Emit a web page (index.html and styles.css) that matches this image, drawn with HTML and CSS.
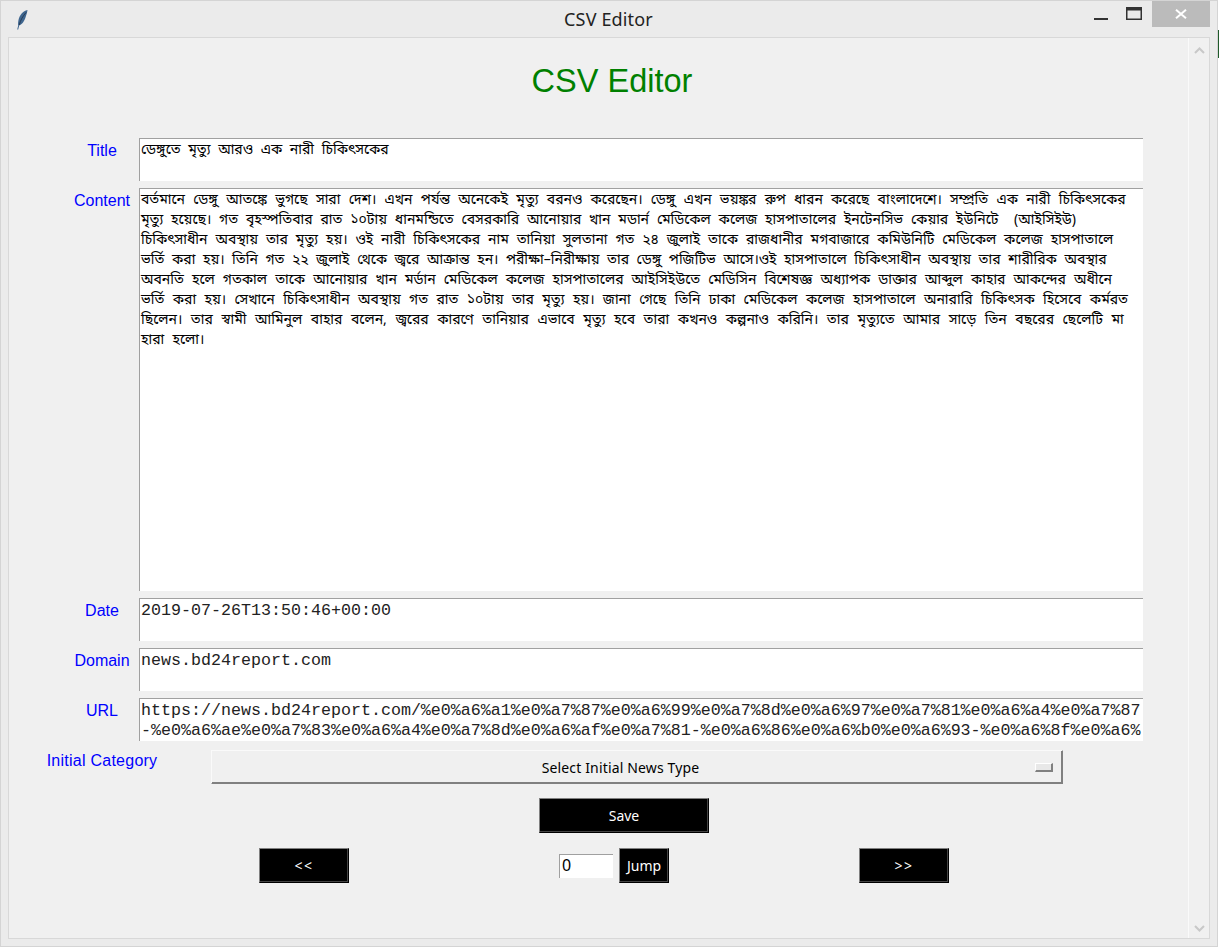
FILE: index.html
```html
<!DOCTYPE html>
<html lang="bn">
<head>
<meta charset="utf-8">
<title>CSV Editor</title>
<link rel="stylesheet" href="styles.css">
</head>
<body>
<div class="window">
  <header class="titlebar">
    <svg class="feather" width="14" height="22" viewBox="0 0 14 22"><path d="M12.500 1 C8 2 4.500 6 3.500 11 C3 13.500 3 15 3.200 16.500 L2.200 20.500 L3.200 20.500 L4.200 16.500 C7 15.500 9.500 12 10.500 8.500 C11.500 5.500 12.300 3 12.500 1 Z" fill="#3f668f"/><path d="M11 3.500 C8 7 5.500 11 4.200 16" stroke="#1e2f45" stroke-width="0.800" fill="none"/></svg>
    <span class="window-title">CSV Editor</span>
    <div class="controls">
      <span class="ctl"><svg width="16" height="16" viewBox="0 0 16 16"><rect x="1" y="12" width="14" height="2" fill="#333"/></svg></span>
      <span class="ctl"><svg width="16" height="14" viewBox="0 0 16 14"><rect x="0.750" y="0.750" width="14.500" height="11.500" fill="none" stroke="#333" stroke-width="1.500"/><rect x="1" y="1" width="14" height="2.500" fill="#333"/></svg></span>
      <span class="ctl close"><svg width="12" height="10" viewBox="0 0 12 10"><path d="M1 0.800 L11 9.200 M11 0.800 L1 9.200" stroke="#fff" stroke-width="2"/></svg></span>
    </div>
  </header>
  <div class="panel">
    <main class="main">
      <h1 class="heading">CSV Editor</h1>
      <div class="form">
        <label class="label">Title</label>
        <div class="field bn short"><span class="line ws-title">ডেঙ্গুতে মৃত্যু আরও এক নারী চিকিৎসকের</span></div>
        <label class="label">Content</label>
        <div class="field bn tall">
          <span class="line">বর্তমানে ডেঙ্গু আতঙ্কে ভুগছে সারা দেশ। এখন পর্যন্ত অনেকেই মৃত্যু বরনও করেছেন। ডেঙ্গু এখন ভয়ঙ্কর রুপ ধারন করেছে বাংলাদেশে। সম্প্রতি এক নারী চিকিৎসকের</span>
          <span class="line ws-2">মৃত্যু হয়েছে। গত বৃহস্পতিবার রাত ১০টায় ধানমন্ডিতে বেসরকারি আনোয়ার খান মডার্ন মেডিকেল কলেজ হাসপাতালের ইনটেনসিভ কেয়ার ইউনিটে  (আইসিইউ)</span>
          <span class="line ws-3">চিকিৎসাধীন অবস্থায় তার মৃত্যু হয়। ওই নারী চিকিৎসকের নাম তানিয়া সুলতানা গত ২৪ জুলাই তাকে রাজধানীর মগবাজারে কমিউনিটি মেডিকেল কলেজ হাসপাতালে</span>
          <span class="line ws-4">ভর্তি করা হয়। তিনি গত ২২ জুলাই থেকে জ্বরে আক্রান্ত হন। পরীক্ষা–নিরীক্ষায় তার ডেঙ্গু পজিটিভ আসে।ওই হাসপাতালে চিকিৎসাধীন অবস্থায় তার শারীরিক অবস্থার</span>
          <span class="line ws-5">অবনতি হলে গতকাল তাকে আনোয়ার খান মর্ডান মেডিকেল কলেজ হাসপাতালের আইসিইউতে মেডিসিন বিশেষজ্ঞ অধ্যাপক ডাক্তার আব্দুল কাহার আকন্দের অধীনে</span>
          <span class="line ws-6">ভর্তি করা হয়। সেখানে চিকিৎসাধীন অবস্থায় গত রাত ১০টায় তার মৃত্যু হয়। জানা গেছে তিনি ঢাকা মেডিকেল কলেজ হাসপাতালে অনারারি চিকিৎসক হিসেবে কর্মরত</span>
          <span class="line ws-7">ছিলেন। তার স্বামী আমিনুল বাহার বলেন, জ্বরের কারণে তানিয়ার এভাবে মৃত্যু হবে তারা কখনও কল্পনাও করিনি। তার মৃত্যুতে আমার সাড়ে তিন বছরের ছেলেটি মা</span>
          <span class="line">হারা হলো।</span>
        </div>
        <label class="label">Date</label>
        <div class="field mono short"><span class="line">2019-07-26T13:50:46+00:00</span></div>
        <label class="label">Domain</label>
        <div class="field mono short"><span class="line">news.bd24report.com</span></div>
        <label class="label">URL</label>
        <div class="field mono short">
          <span class="line">https://news.bd24report.com/%e0%a6%a1%e0%a7%87%e0%a6%99%e0%a7%8d%e0%a6%97%e0%a7%81%e0%a6%a4%e0%a7%87</span>
          <span class="line">-%e0%a6%ae%e0%a7%83%e0%a6%a4%e0%a7%8d%e0%a6%af%e0%a7%81-%e0%a6%86%e0%a6%b0%e0%a6%93-%e0%a6%8f%e0%a6%</span>
        </div>
      </div>
      <div class="category-row">
        <label class="label category-label">Initial Category</label>
        <div class="menu">
          <span class="menu-text">Select Initial News Type</span>
          <span class="menu-indicator"></span>
        </div>
      </div>
      <div class="save-row"><button class="btn save">Save</button></div>
      <div class="nav-row">
        <button class="btn nav">&lt;&lt;</button>
        <div class="jump">
          <input class="jump-input" value="0">
          <button class="btn jump-btn">Jump</button>
        </div>
        <button class="btn nav">&gt;&gt;</button>
      </div>
    </main>
    <aside class="scrollbar">
      <svg width="11" height="7" viewBox="0 0 11 7"><path d="M1 6 L5.500 1.500 L10 6" fill="none" stroke="#c8c8c8" stroke-width="2"/></svg>
      <svg width="11" height="7" viewBox="0 0 11 7"><path d="M1 1 L5.500 5.500 L10 1" fill="none" stroke="#c8c8c8" stroke-width="2"/></svg>
    </aside>
  </div>
</div>
<div class="backdrop-strip"></div>
</body>
</html>
```
FILE: styles.css
```css
* { box-sizing: border-box; }
html, body { margin: 0; padding: 0; height: 100%; overflow: hidden; }
body { background: #fff; font-family: "Liberation Sans", Arial, sans-serif; }

.window {
  width: 1218px;
  height: 947px;
  background: #ebebeb;
  border: 1px solid #d4d4d4;
  display: flex;
  flex-direction: column;
  padding-bottom: 7px;
}

.titlebar {
  height: 36px;
  flex: none;
  display: flex;
  align-items: flex-start;
  position: relative;
}
.feather { margin: 8px 0 0 14px; flex: none; }
.window-title {
  position: absolute;
  left: 0; right: 1px;
  top: 6px;
  text-align: center;
  font: 18px/24px "Noto Sans", "Open Sans", sans-serif;
  letter-spacing: 0.150px;
  color: #222;
}
.controls { margin-left: auto; display: flex; margin-right: 7px; }
.ctl {
  width: 33px; height: 26px;
  display: flex; align-items: center; justify-content: center;
}
.close { width: 58px; background: #bbb; margin-left: 2px; }

.panel {
  flex: 1;
  margin: 0 7px;
  border: 1px solid #d8d8d8;
  background: #f0f0f0;
  display: flex;
  min-height: 0;
}
.main { flex: 1; min-width: 0; padding-left: 56px; }
.heading {
  margin: 0;
  padding: 25px 0 39px 0;
  width: 1094px;
  text-align: center;
  font: 400 32.500px/36px "Liberation Sans", Arial, sans-serif;
  color: #008000;
}

.form {
  display: grid;
  grid-template-columns: 74px 1004px;
  row-gap: 7px;
}
.label {
  justify-self: center;
  white-space: nowrap;
  font-size: 16px;
  line-height: 18px;
  padding-top: 4px;
  color: #00f;
}
.field {
  background: #fff;
  border-top: 1px solid #a0a0a0;
  border-left: 1px solid #a0a0a0;
  padding: 2px 0 0 1px;
  overflow: hidden;
  color: #000;
}
.short { height: 43px; }
.tall { height: 403px; }
.line { display: block; white-space: pre; }
.bn {
  font-family: "Noto Sans Bengali", "Lohit Bengali", "Noto Sans", "Liberation Sans", sans-serif;
  font-size: 14px;
  line-height: 20px;
  word-spacing: 4.600px;
}
.ws-title { word-spacing: 4px; }
.ws-2 { word-spacing: 4.200px; }
.ws-3 { word-spacing: 4.250px; }
.ws-4 { word-spacing: 3.930px; }
.ws-5 { word-spacing: 4.450px; }
.ws-6 { word-spacing: 4.750px; }
.ws-7 { word-spacing: 4.950px; }
.mono {
  font-family: "Liberation Mono", "Courier New", monospace;
  font-size: 16.670px;
  line-height: 20px;
  color: #222;
}

.category-row {
  display: grid;
  grid-template-columns: 74px 1fr;
  margin-top: 9px;
  align-items: start;
}
.category-label { padding-top: 2px; letter-spacing: 0.250px; }
.menu {
  margin-left: 72px;
  width: 852px;
  height: 34px;
  display: flex;
  align-items: center;
  background: #f0f0f0;
  border: 1px solid;
  border-color: #fafafa #808080 #808080 #fafafa;
  box-shadow: inset -1px -1px 0 #808080;
}
.menu-text {
  flex: 1;
  margin-top: 2px;
  text-align: center;
  font: 14px/20px "Noto Sans", sans-serif;
  letter-spacing: 0.150px;
  color: #000;
}
.menu-indicator {
  width: 18px;
  height: 9px;
  margin: 1px 9px 0 6px;
  background: #e8e8e8;
  border-style: solid;
  border-width: 1px 2px 2px 1px;
  border-color: #fff #808080 #808080 #fff;
}

.btn {
  padding: 0;
  background: #000;
  color: #fff;
  font: 14px/18px "Noto Sans", sans-serif;
  border: 1px solid;
  border-color: #808080 #000 #000 #808080;
  box-shadow: inset -1px -1px 0 #444;
}
.save-row { margin: 14px 0 0 474px; display: flex; }
.save { width: 170px; height: 35px; }
.nav-row { margin: 15px 0 0 194px; display: flex; align-items: center; }
.nav { width: 90px; height: 35px; letter-spacing: 1.500px; font-size: 14px; }
.jump { display: flex; align-items: center; margin: 0 190px 0 210px; }
.jump-input {
  width: 54px;
  height: 24px;
  margin: 0 6px 0 0;
  padding: 0 0 2px 2px;
  background: #fff;
  border: 0;
  border-top: 1px solid #a0a0a0;
  border-left: 1px solid #a0a0a0;
  font: 16px/18px "Noto Sans", sans-serif;
  color: #000;
}
.jump-btn { width: 50px; height: 35px; }

.scrollbar {
  flex: none;
  width: 21px;
  border-left: 1px solid #fafafa;
  display: flex;
  flex-direction: column;
  justify-content: space-between;
  align-items: center;
  padding: 9px 0 6px;
}

.backdrop-strip {
  position: absolute;
  right: 0; top: 30px;
  width: 1px; height: 28px;
  background: #1f5a2a;
}
```
